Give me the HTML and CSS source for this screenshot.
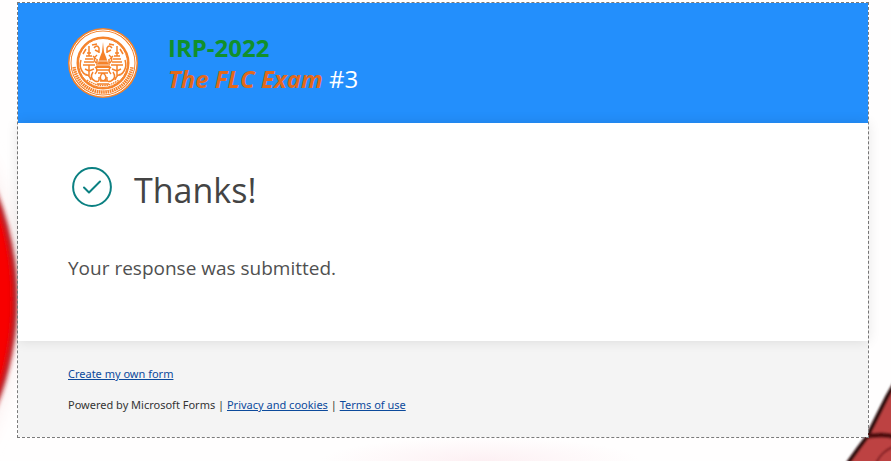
FILE: index.html
```html
<!DOCTYPE html>
<html lang="en">
<head>
<meta charset="utf-8">
<meta name="viewport" content="width=device-width, initial-scale=1">
<title>IRP-2022 The FLC Exam #3</title>
<link rel="stylesheet" href="styles.css">
</head>
<body>
<svg class="art art-left" viewBox="0 0 60 461" aria-hidden="true">
  <defs>
    <filter id="soft" x="-20%" y="-20%" width="140%" height="140%"><feGaussianBlur stdDeviation="2"/></filter>
    <filter id="haze" x="-50%" y="-50%" width="200%" height="200%"><feGaussianBlur stdDeviation="9"/></filter>
  </defs>
  <circle cx="-274" cy="299" r="296" fill="#fbeeee" filter="url(#haze)"/>
  <circle cx="-274" cy="299" r="289" fill="#f80404" stroke="#b51f22" stroke-width="5" filter="url(#soft)"/>
</svg>
<svg class="art art-right" viewBox="0 0 60 90" aria-hidden="true">
  <defs>
    <filter id="edge" x="-20%" y="-20%" width="140%" height="140%"><feGaussianBlur stdDeviation="1"/></filter>
  </defs>
  <g filter="url(#edge)">
    <path d="M17 92L27 78L36 66L44 50L51 36L56 26L64 12V98H15Z" fill="#bd4342"/>
    <path d="M17 92L27 78L36 66L44 50L51 36L56 26L64 12" fill="none" stroke="#2c090b" stroke-width="4"/>
    <path d="M34 65C44 65 52 62 64 66" fill="none" stroke="#4e0c10" stroke-width="5"/>
    <path d="M45 92C49 84 53 80 64 75" fill="none" stroke="#7e1c20" stroke-width="2"/>
  </g>
</svg>
<div class="card">
  <header class="banner">
    <svg class="seal" viewBox="0 0 70 70" role="img" aria-label="University seal">
      <circle cx="35" cy="35" r="35" fill="#f5822a"/>
      <g fill="none" stroke="#fff">
        <circle cx="35" cy="35" r="33" stroke-width="1"/>
        <circle cx="35" cy="35" r="29" stroke-width="5"/>
      </g>
      <path d="M6 39A29.300 29.300 0 0 0 64 39" fill="none" stroke="#f5822a" stroke-width="3.500" stroke-dasharray="1.600 .6"/>
      <circle cx="35" cy="35" r="24.500" fill="#fff" stroke="#f5822a" stroke-width="1"/>
      <g fill="none" stroke="#f5822a" stroke-width="1.500">
        <path d="M21 18v10M19 25h4M18 28h6M17 31h8M16 34h10M15 37h12M21 37v11M17 41l4 2 5-2M13 32q-2 6 1 11q3 5 7 4M29 27q-5 4-1 8M26 20q3-4 5 0v5M27 22l4 2M25 44q-4 6 2 9q5 2 4-4M27 39q4 3 0 7M15 26l3-5M24 17l5-1M16 46q5 0 7 6M25 28l3 3M29 31v6"/>
      </g>
      <g fill="none" stroke="#f5822a" stroke-width="1.500" transform="matrix(-1 0 0 1 70 0)">
        <path d="M21 18v10M19 25h4M18 28h6M17 31h8M16 34h10M15 37h12M21 37v11M17 41l4 2 5-2M13 32q-2 6 1 11q3 5 7 4M29 27q-5 4-1 8M26 20q3-4 5 0v5M27 22l4 2M25 44q-4 6 2 9q5 2 4-4M27 39q4 3 0 7M15 26l3-5M24 17l5-1M16 46q5 0 7 6M25 28l3 3M29 31v6"/>
      </g>
      <path d="M35 14l1 10 2 5 2 6 3 5H27l3-5 2-6 2-5Z" fill="#f5822a"/>
      <path d="M31 33h8M29 37h12" stroke="#fff" stroke-width=".7"/>
      <path d="M28 42h14M30 45h10M32 53h7M29 56h12M35 45q-4 3-2 7q4 2 5-2q0-3-3-5" fill="none" stroke="#f5822a" stroke-width="1.500"/>
      <path d="M19 52Q35 63 51 52" fill="none" stroke="#f5822a" stroke-width="1.500" stroke-dasharray="1.500 .8"/>
    </svg>
    <h1 class="title"><b class="code">IRP-2022</b><br><b class="exam">The FLC Exam</b> #3</h1>
  </header>
  <main class="message">
    <div class="thanks">
      <svg class="check" viewBox="0 0 40 40" aria-hidden="true">
        <circle cx="20" cy="20" r="18.900"/>
        <path d="M12 20.500L17 25.500L28 14.500"/>
      </svg>
      <h2>Thanks!</h2>
    </div>
    <p class="status">Your response was submitted.</p>
  </main>
  <footer class="footer">
    <p><a href="#create">Create my own form</a></p>
    <p>Powered by Microsoft Forms | <a href="#privacy">Privacy and cookies</a> | <a href="#terms">Terms of use</a></p>
  </footer>
</div>
</body>
</html>
```
FILE: styles.css
```css
* {
  box-sizing: border-box;
}

body {
  margin: 0;
  padding: 2px 22px 23px 17px;
  background: radial-gradient(ellipse 160px 24px at 54% 100%, #fdf0f3, #fffefe);
  color: #333;
  font-family: "Segoe UI", "Noto Sans", "Open Sans", sans-serif;
}

h1,
h2,
p {
  margin: 0;
  font-weight: 400;
}

.art {
  position: absolute;
  z-index: -1;
}

.art-left {
  top: 0;
  left: 0;
  width: 60px;
  height: 461px;
}

.art-right {
  right: 0;
  bottom: 0;
  width: 60px;
  height: 90px;
}

.card {
  border: 1px dashed #7b7b7b;
}

.banner {
  display: flex;
  align-items: center;
  gap: 30px;
  padding: 25px 50px;
  background: #238ffc;
}

.seal {
  flex: none;
  width: 70px;
  height: 70px;
}

.title {
  color: #fff;
  font-family: "Segoe UI", "Open Sans", sans-serif;
  font-size: 24px;
  line-height: 31px;
}

.code {
  color: #11902b;
}

.exam {
  color: #e2691b;
  font-style: italic;
}

.message {
  position: relative;
  padding: 40px 50px 58px;
  background: #fff;
  box-shadow: 0 0 12px rgba(0, 0, 0, 0.11);
}

.thanks {
  display: flex;
  align-items: center;
  gap: 22px;
  padding-left: 4px;
}

.thanks h2 {
  padding-top: 2px;
  color: #444;
  font-family: "Segoe UI", "Open Sans", sans-serif;
  font-size: 34px;
  line-height: 50px;
}

.check {
  flex: none;
  width: 40px;
  height: 40px;
  margin-bottom: 4px;
  fill: none;
  stroke: #0b8082;
  stroke-width: 2;
  stroke-linecap: round;
  stroke-linejoin: round;
}

.status {
  margin-top: 38px;
  color: #505050;
  font-family: "Segoe UI", "Open Sans", sans-serif;
  font-size: 19px;
  line-height: 30px;
}

.footer {
  display: grid;
  gap: 15px;
  padding: 25px 50px 24px;
  background: #f4f4f4;
  font-size: 11px;
  line-height: 16px;
}

.footer a {
  color: #0c4a9c;
  text-underline-offset: 1px;
}
```
